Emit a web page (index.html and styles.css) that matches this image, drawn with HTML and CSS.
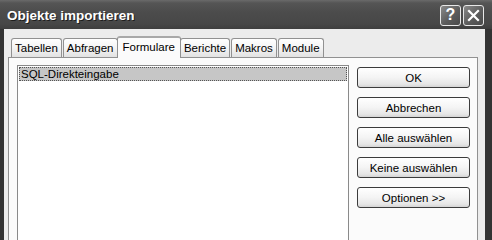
FILE: index.html
```html
<!DOCTYPE html>
<html lang="de">
<head>
<meta charset="utf-8">
<title>Objekte importieren</title>
<link rel="stylesheet" href="styles.css">
</head>
<body>
<div class="window">
  <div class="titlebar">
    <span class="title">Objekte importieren</span>
    <div class="caption-btns">
      <span class="cbtn help">?</span>
      <span class="cbtn close"><svg width="13" height="13" viewBox="0 0 13 13"><path d="M2 2 L11 11 M11 2 L2 11" stroke="#fff" stroke-width="2.2" stroke-linecap="square" fill="none"/></svg></span>
    </div>
  </div>
  <div class="client">
    <div class="tabs">
      <span class="tab">Tabellen</span>
      <span class="tab">Abfragen</span>
      <span class="tab active">Formulare</span>
      <span class="tab">Berichte</span>
      <span class="tab">Makros</span>
      <span class="tab">Module</span>
    </div>
    <div class="panel">
      <div class="list">
        <div class="item">SQL-Direkteingabe</div>
      </div>
      <div class="buttons">
        <button class="btn">OK</button>
        <button class="btn">Abbrechen</button>
        <button class="btn">Alle auswählen</button>
        <button class="btn">Keine auswählen</button>
        <button class="btn">Optionen &gt;&gt;</button>
      </div>
    </div>
  </div>
</div>
</body>
</html>
```
FILE: styles.css
```css
html, body {
  margin: 0;
  padding: 0;
  background: #2f2f2f;
  overflow: hidden;
}
.window {
  width: 492px;
  height: 240px;
  display: flex;
  flex-direction: column;
  background: #333;
  overflow: hidden;
  font-family: "Liberation Sans", Arial, sans-serif;
  font-size: 11.5px;
  color: #000;
}
.titlebar {
  height: 28px;
  padding: 1px 8px 0 7px;
  display: flex;
  align-items: center;
  justify-content: space-between;
  background: linear-gradient(#6a6a6a 0px, #555 3px, #4c4c4c 12px, #474747 24px, #3e3e3e 29px);
  flex: none;
}
.title {
  font-family: "Liberation Sans", Arial, sans-serif;
  font-weight: bold;
  font-size: 13.5px;
  color: #fff;
  text-shadow: 1px 1px 0 #1e1e1e;
}
.caption-btns {
  display: flex;
  gap: 2px;
}
.cbtn {
  width: 19px;
  height: 19px;
  border: 1px solid #e8e8e8;
  border-radius: 3px;
  background: linear-gradient(135deg, #8a8a8a, #5c5c5c 55%, #4a4a4a);
  display: flex;
  align-items: center;
  justify-content: center;
  color: #fff;
  font-weight: bold;
  font-size: 16px;
  font-family: "Liberation Sans", Arial, sans-serif;
}
.client {
  flex: 1;
  margin: 0 7px 0 4px;
  background: #ececec;
  padding: 6px 7px 0 4px;
  display: flex;
  flex-direction: column;
  min-height: 0;
}
.tabs {
  display: flex;
  align-items: flex-end;
  height: 22px;
  padding-left: 3px;
  flex: none;
}
.tab {
  height: 18px;
  line-height: 19px;
  border: 1px solid #919191;
  border-bottom: none;
  border-radius: 3px 3px 0 0;
  padding: 0 3px;
  margin-right: 1px;
  background: linear-gradient(#ffffff, #f4f4f4 50%, #e2e2e2);
  white-space: nowrap;
}
.tab.active {
  line-height: 18px;
  padding: 0 5px;
  margin: 0 -1px -1px -2px;
  border-top: 2px solid #a8a8a8;
  height: 20px;
  background: #fbfbfb;
  position: relative;
  z-index: 1;
}
.panel {
  flex: none;
  height: 260px;
  border: 1px solid #919191;
  background: #fbfbfb;
  padding: 7px 7px 0 8px;
  display: flex;
  align-items: flex-start;
  gap: 8px;
}
.list {
  width: 330px;
  height: 240px;
  border: 1px solid #8a8a8a;
  background: #fff;
  padding: 0 1px;
}
.item {
  margin-top: 1px;
  height: 14px;
  line-height: 14px;
  padding: 0 2px;
  background: #c6c6c6;
  outline: 1px dotted #555;
  outline-offset: -1px;
  color: #000;
}
.buttons {
  display: flex;
  flex-direction: column;
  gap: 9px;
  padding-top: 2px;
}
.btn {
  width: 113px;
  height: 21px;
  margin: 0;
  padding: 0;
  border: 1px solid #3c3c3c;
  border-radius: 3px;
  background: linear-gradient(#ffffff, #f4f4f4 50%, #e6e6e6 85%, #d4d4d4);
  font-family: "Liberation Sans", Arial, sans-serif;
  font-size: 11.5px;
  color: #000;
}
```
